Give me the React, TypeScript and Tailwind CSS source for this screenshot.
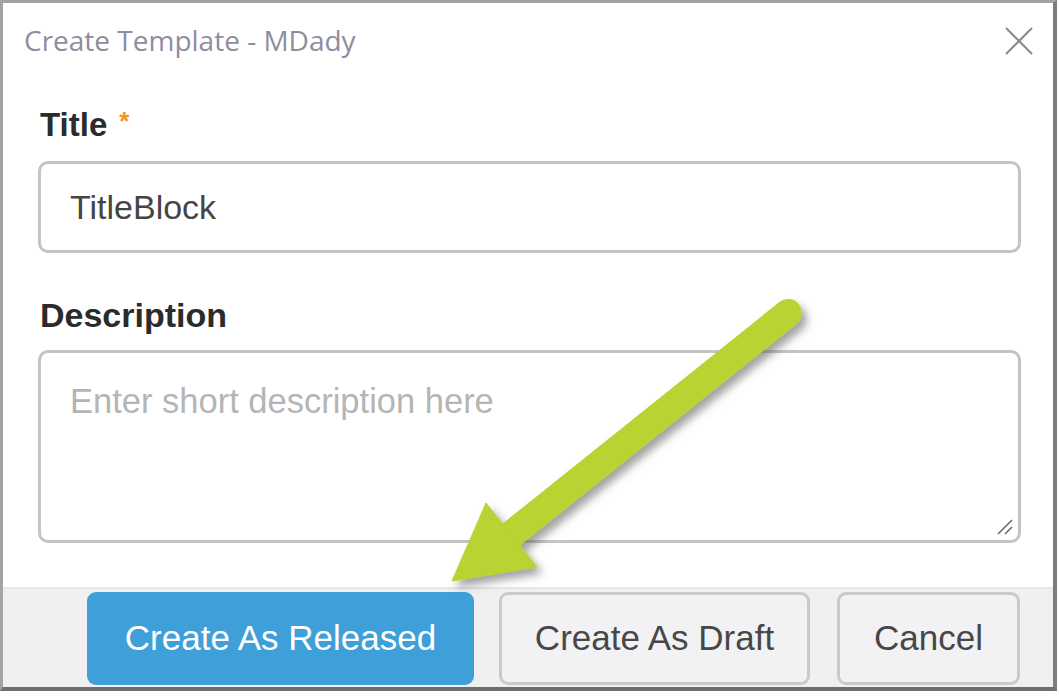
const Arrow = () => (
  <svg
    className="pointer-events-none absolute left-0 top-0"
    width={1059}
    height={697}
    viewBox="0 0 1059 697"
  >
    <defs>
      <filter id="arrowShadow" x="-20%" y="-20%" width="140%" height="140%">
        <feDropShadow dx="5" dy="6" stdDeviation="4" floodColor="#555" floodOpacity="0.55" />
      </filter>
    </defs>
    <g filter="url(#arrowShadow)" fill="#b8d432" stroke="#b8d432">
      <line x1={788} y1={313} x2={512} y2={534} strokeWidth={28} strokeLinecap="round" />
      <polygon points="452,581 486,503 537,567" strokeWidth={1} strokeLinejoin="round" />
    </g>
  </svg>
);

const ResizeGrip = () => (
  <svg className="absolute bottom-[5px] right-[5px]" width={16} height={16} viewBox="0 0 16 16">
    <line x1="1" y1="15" x2="15" y2="1" stroke="#6b6b6b" strokeWidth="1.6" />
    <line x1="8" y1="15" x2="15" y2="8" stroke="#6b6b6b" strokeWidth="1.6" />
  </svg>
);

const CloseIcon = () => (
  <svg width={28} height={28} viewBox="0 0 28 28" className="mt-[5px]">
    <line x1="1" y1="1" x2="27" y2="27" stroke="#8a8a8a" strokeWidth="2" />
    <line x1="27" y1="1" x2="1" y2="27" stroke="#8a8a8a" strokeWidth="2" />
  </svg>
);

export default function App() {
  return (
    <div className="relative h-[697px] w-[1059px] overflow-hidden bg-white">
      <div className="flex h-[691px] w-[1057px] flex-col border-l-[3px] border-r-[4px] border-t-[3px] border-b-[4px] border-l-[#a3a3a3] border-r-[#7d7d7d] border-t-[#a3a3a3] border-b-[#6e6e6e] bg-white">
        {/* title bar */}
        <div className="flex h-[82px] items-start justify-between pl-[21px] pr-[20px] pt-[19px]">
          <span className="font-['Open_Sans',sans-serif] text-[28px] leading-[36px] text-[#8e8d9e]">
            Create Template - MDady
          </span>
          <CloseIcon />
        </div>

        {/* form */}
        <div className="flex flex-1 flex-col pl-[35px] pr-[32px] font-['Liberation_Sans',Arial,sans-serif]">
          <label className="flex h-[76px] items-start pl-[2px] pt-[21px] text-[33px] font-bold leading-[38px] text-[#2b2b2b]">
            Title
            <span className="ml-[12px] text-[26px] leading-[30px] text-[#f0962a]">*</span>
          </label>
          <input
            readOnly
            value="TitleBlock"
            className="h-[92px] w-full rounded-[10px] border-[3px] border-[#c4c4c4] bg-white px-[29px] text-[34px] text-[#454545] outline-none"
          />
          <label className="h-[97px] pl-[2px] pt-[43px] text-[34px] font-bold leading-[38px] text-[#2b2b2b]">
            Description
          </label>
          <div className="relative h-[193px] w-full rounded-[10px] border-[3px] border-[#c4c4c4] bg-white px-[29px] pt-[28px] text-[34.5px] leading-[40px] text-[#b5b5b5]">
            Enter short description here
            <ResizeGrip />
          </div>
        </div>

        {/* footer */}
        <div className="mt-[42px] flex h-[100px] items-start justify-end gap-[25px] border-t-[2px] border-[#e6e6e8] bg-[#f0f0f2] pr-[33px] pt-[3px] font-['Liberation_Sans',Arial,sans-serif] text-[35px]">
          <button className="h-[93px] w-[387px] rounded-[9px] bg-[#3f9fd8] text-white">
            Create As Released
          </button>
          <button className="h-[93px] w-[311px] rounded-[9px] border-[3px] border-[#cacaca] bg-[#f2f2f4] text-[#474747]">
            Create As Draft
          </button>
          <button className="ml-[2px] h-[93px] w-[183px] rounded-[9px] border-[3px] border-[#cacaca] bg-[#f2f2f4] text-[#474747]">
            Cancel
          </button>
        </div>
      </div>
      <Arrow />
    </div>
  );
}
